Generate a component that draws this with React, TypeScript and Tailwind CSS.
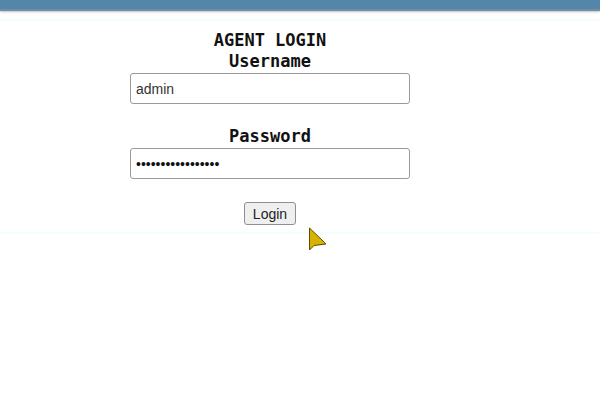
import React, { useState } from 'react';

function Cursor() {
  return (
    <svg
      className="absolute left-[307px] top-[226px]"
      width="22"
      height="27"
      viewBox="0 0 22 27"
    >
      <path d="M2.5 2 L2.5 24 L7 19.5 L19 18 Z" fill="#d8b400" stroke="#5c4a00" strokeWidth="1" strokeLinejoin="round" />
    </svg>
  );
}

export default function App() {
  const [username, setUsername] = useState('admin');
  const [password, setPassword] = useState('supersecretpass12');

  return (
    <div className="relative w-[600px] h-[400px] bg-white overflow-hidden">
      <div className="h-[11px] bg-[#5386a9] border-b-2 border-[#6f8fa6] shadow-[0_1px_2px_rgba(0,0,0,0.25)]" />
      <div className="mt-[8px] h-[215px] border-t-2 border-b-2 border-[#f3fffd] bg-[#fefffe]">
        <form
          className="ml-[130px] w-[280px] pt-[9px] flex flex-col items-center font-['DejaVu_Sans_Mono',monospace] font-bold text-[17px] text-[#111]"
          onSubmit={(e) => e.preventDefault()}
        >
          <h2 className="leading-[21px] text-[17px]">AGENT LOGIN</h2>
          <label className="leading-[21px]" htmlFor="user">Username</label>
          <input
            id="user"
            type="text"
            value={username}
            onChange={(e) => setUsername(e.target.value)}
            className="mt-[1px] w-[280px] h-[31px] px-[5px] border border-[#9a9a9a] rounded-[3px] bg-white font-['Liberation_Sans',Arial,sans-serif] font-normal text-[14px] text-[#333]"
          />
          <label className="mt-[22px] leading-[21px]" htmlFor="pass">Password</label>
          <input
            id="pass"
            type="password"
            value={password}
            onChange={(e) => setPassword(e.target.value)}
            className="mt-[1px] w-[280px] h-[31px] px-[5px] border border-[#9a9a9a] rounded-[3px] bg-white font-['Liberation_Sans',Arial,sans-serif] font-normal text-[14px] text-[#111]"
          />
          <button
            type="submit"
            className="mt-[23px] w-[52px] h-[23px] border border-[#8f8f8f] rounded-[3px] bg-[#efefef] font-['Liberation_Sans',Arial,sans-serif] font-normal text-[14px] text-[#222] leading-none"
          >
            Login
          </button>
        </form>
      </div>
      <Cursor />
    </div>
  );
}
